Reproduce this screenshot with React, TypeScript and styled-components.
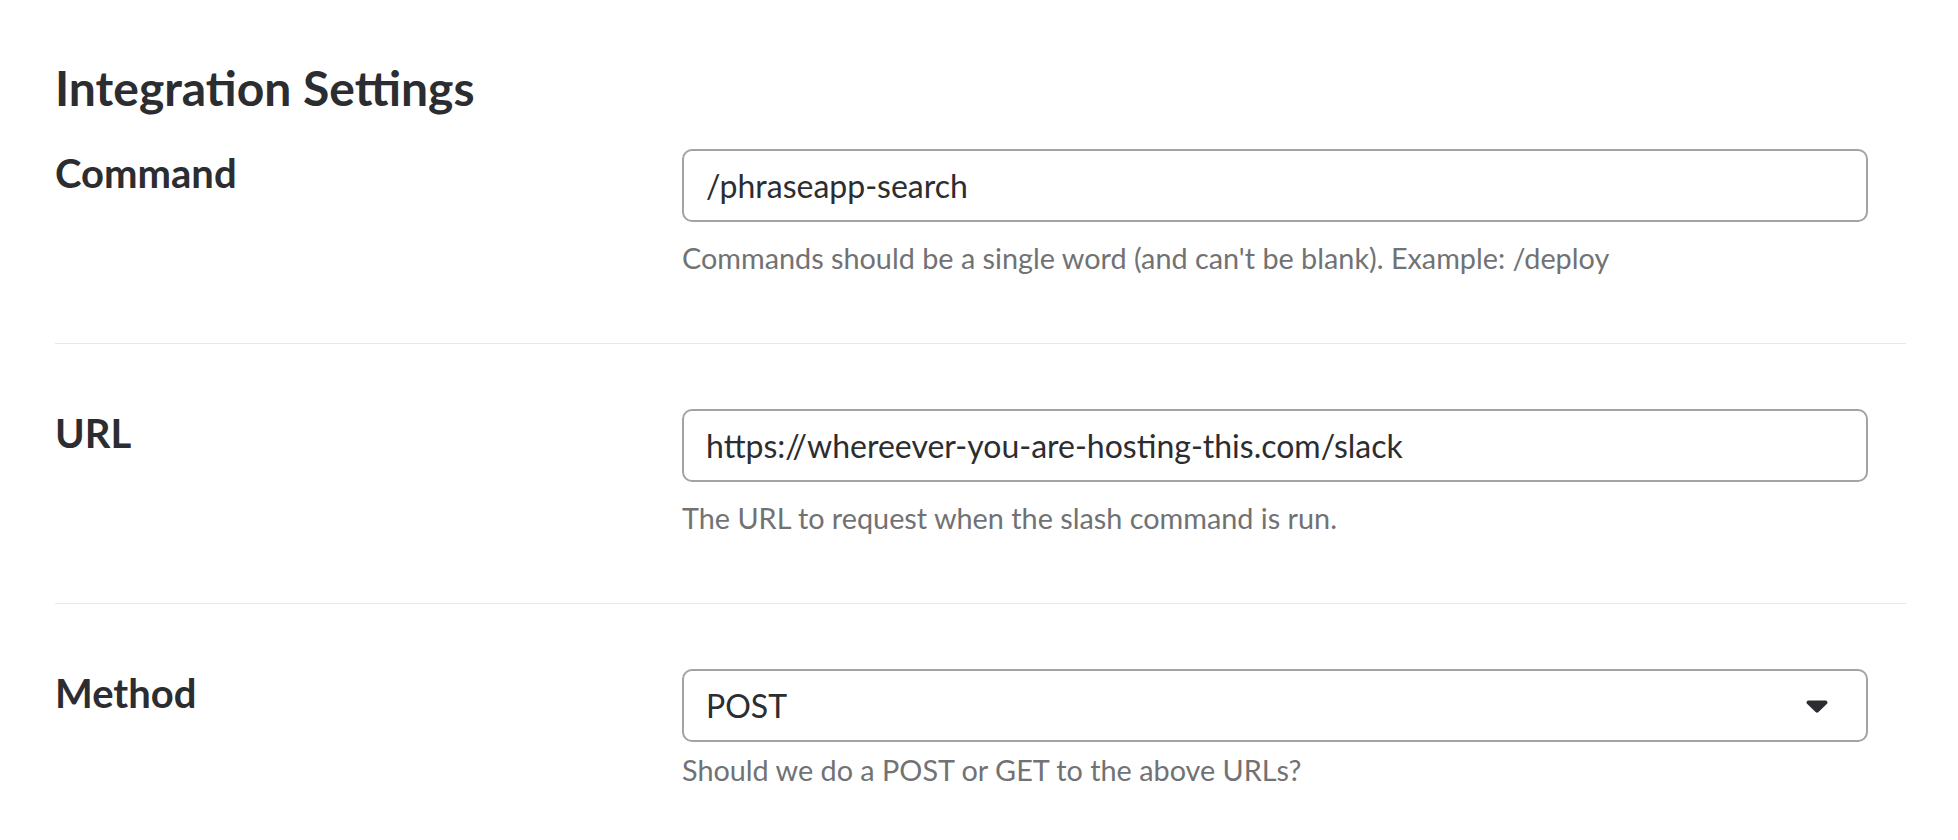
import React from 'react';
import styled, { createGlobalStyle } from 'styled-components';

const GlobalStyle = createGlobalStyle`
	html, body {
		margin: 0;
		padding: 0;
		background: #ffffff;
	}
	body {
		font-family: Lato, 'Noto Sans', sans-serif;
		color: #2c2d30;
	}
`;

const Page = styled.div`
	padding: 60px 0 0 55px;
	width: 1851px;
`;

const Heading = styled.h2`
	margin: 0;
	font-size: 48px;
	line-height: 56px;
	font-weight: 700;
	color: #2c2d30;
`;

const Section = styled.section<{ $first?: boolean; $last?: boolean }>`
	display: grid;
	grid-template-columns: 627px 1186px;
	padding-top: ${(props) => (props.$first ? '33px' : '65px')};
	padding-bottom: 67px;
	border-bottom: ${(props) => (props.$last ? 'none' : '1px solid #e8e8e8')};
`;

const Label = styled.label`
	font-size: 40px;
	line-height: 48px;
	font-weight: 700;
	color: #2c2d30;
`;

const Field = styled.div`
	display: flex;
	flex-direction: column;
`;

const TextInput = styled.input`
	box-sizing: border-box;
	width: 100%;
	height: 73px;
	margin: 0;
	padding: 0 22px;
	border: 2px solid #a3a3a3;
	border-radius: 10px;
	font-family: Lato, 'Noto Sans', sans-serif;
	font-size: 32px;
	color: #2c2d30;
	background: #ffffff;
	outline: none;
`;

const SelectWrap = styled.div`
	position: relative;
`;

const Select = styled.select`
	box-sizing: border-box;
	width: 100%;
	height: 73px;
	margin: 0;
	padding: 0 60px 0 22px;
	border: 2px solid #a3a3a3;
	border-radius: 10px;
	font-family: Lato, 'Noto Sans', sans-serif;
	font-size: 32px;
	color: #2c2d30;
	background: #ffffff;
	appearance: none;
	outline: none;
`;

const Caret = styled.svg`
	position: absolute;
	right: 40px;
	top: 31px;
	pointer-events: none;
`;

const Help = styled.p<{ $tight?: boolean }>`
	margin: ${(props) => (props.$tight ? '10px 0 0' : '18px 0 0')};
	font-size: 28.8px;
	line-height: 36px;
	color: #717274;
`;

const App: React.FC = () => {
	return (
		<React.Fragment>
			<GlobalStyle />
			<Page>
				<Heading>Integration Settings</Heading>
				<Section $first>
					<Label htmlFor="command">Command</Label>
					<Field>
						<TextInput id="command" defaultValue="/phraseapp-search" />
						<Help>Commands should be a single word (and can't be blank). Example: /deploy</Help>
					</Field>
				</Section>
				<Section>
					<Label htmlFor="url">URL</Label>
					<Field>
						<TextInput id="url" defaultValue="https://whereever-you-are-hosting-this.com/slack" />
						<Help>The URL to request when the slash command is run.</Help>
					</Field>
				</Section>
				<Section $last>
					<Label htmlFor="method">Method</Label>
					<Field>
						<SelectWrap>
							<Select id="method" defaultValue="POST">
								<option value="POST">POST</option>
								<option value="GET">GET</option>
							</Select>
							<Caret width="22" height="13" viewBox="0 0 22 13">
								<path d="M2.5 0.5h17a2 2 0 0 1 1.5 3.3l-8.5 8.2a2 2 0 0 1-2.9 0L1 3.8A2 2 0 0 1 2.5 0.5z" fill="#2c2d30" />
							</Caret>
						</SelectWrap>
						<Help $tight>Should we do a POST or GET to the above URLs?</Help>
					</Field>
				</Section>
			</Page>
		</React.Fragment>
	);
};

export default App;
